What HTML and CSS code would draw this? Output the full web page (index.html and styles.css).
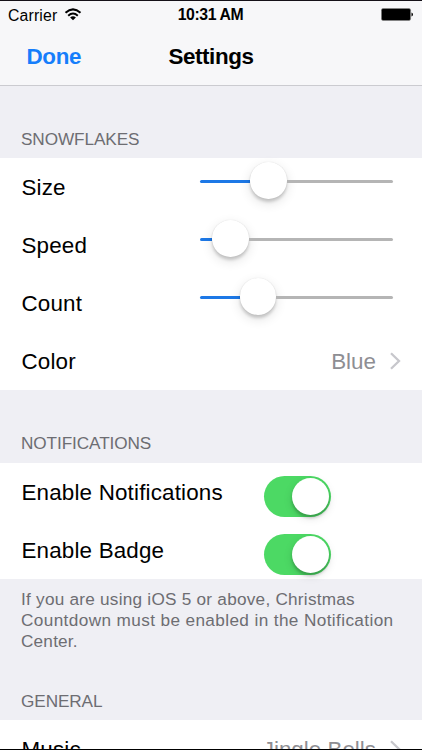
FILE: index.html
```html
<!DOCTYPE html>
<html lang="en">
<head>
<meta charset="utf-8">
<title>Settings</title>
<link rel="stylesheet" href="styles.css">
</head>
<body>
<div class="screen">
  <header class="top">
    <div class="status">
      <div class="carrier"><span>Carrier</span>
        <svg class="wifi" width="18" height="13" viewBox="0 0 18 13" fill="none" stroke="#000" stroke-width="2"><path d="M1.500 4.800Q9-2 16.500 4.800"/><path d="M4.200 7.700Q9 3.400 13.800 7.700"/><path d="M9 12.300L6.100 9.500Q9 7.100 11.900 9.500Z" fill="#000" stroke="none"/></svg>
      </div>
      <span class="time">10:31 AM</span>
      <svg class="battery" width="33" height="13" viewBox="0 0 33 13"><rect x=".4" y=".4" width="29.200" height="12.200" rx="1.800" fill="#000" stroke="#888" stroke-width=".7"/><path d="M30.500 4.500Q32 5 32 6.500T30.500 8.500Z" fill="#000"/></svg>
    </div>
    <nav class="nav"><span class="done">Done</span><h1 class="title">Settings</h1></nav>
  </header>
  <main>
    <h2 class="heading h-snow">Snowflakes</h2>
    <section class="list">
      <div class="row"><span class="label">Size</span><div class="slider"><i class="fill f-size"></i><i class="knob"></i><i class="rest"></i></div></div>
      <div class="row"><span class="label">Speed</span><div class="slider"><i class="fill f-speed"></i><i class="knob"></i><i class="rest"></i></div></div>
      <div class="row"><span class="label">Count</span><div class="slider"><i class="fill f-count"></i><i class="knob"></i><i class="rest"></i></div></div>
      <div class="row"><span class="label">Color</span><div class="value"><span>Blue</span><svg width="12" height="18" viewBox="0 0 12 18" fill="none" stroke="#c7c7cc" stroke-width="2.300"><path d="M1 1.200L9 9L1 16.800"/></svg></div></div>
    </section>
    <h2 class="heading h-notif">Notifications</h2>
    <section class="list">
      <div class="row"><span class="label">Enable Notifications</span><div class="switch"><i></i></div></div>
      <div class="row"><span class="label">Enable Badge</span><div class="switch"><i></i></div></div>
    </section>
    <p class="note"><span class="n1">If you are using iOS 5 or above, Christmas</span><span class="n2">Countdown must be enabled in the Notification</span><span class="n3">Center.</span></p>
    <h2 class="heading h-general">General</h2>
    <section class="list">
      <div class="row"><span class="label">Music</span><div class="value"><span>Jingle Bells</span><svg width="12" height="18" viewBox="0 0 12 18" fill="none" stroke="#c7c7cc" stroke-width="2.300"><path d="M1 1.200L9 9L1 16.800"/></svg></div></div>
    </section>
  </main>
</div>
</body>
</html>
```
FILE: styles.css
```css
* { box-sizing: border-box; margin: 0; padding: 0; }
body { background: #efeff4; font-family: "Liberation Sans", Arial, sans-serif; color: #000; }
.screen { width: 422px; height: 750px; overflow: hidden; border-top: 1px solid #151118; border-bottom: 1px solid #000; background: #efeff4; }
.top { height: 85px; background: #f7f7f9; border-bottom: 1px solid #cbcbd0; }
.status { height: 28px; display: grid; grid-template-columns: 1fr auto 1fr; align-items: center; padding: 0 9px 0 8px; font-size: 15.8px; white-space: nowrap; }
.carrier { display: flex; align-items: center; gap: 7px; letter-spacing: .15px; padding-top: 1px; }
.wifi { margin-top: -2px; }
.time { font-weight: bold; letter-spacing: -.4px; }
.battery { justify-self: end; margin: -1px -1px 0 0; }
.nav { height: 56px; display: grid; grid-template-columns: 1fr auto 1fr; align-items: center; padding: 0 26px; font-size: 22.4px; line-height: 56px; font-weight: bold; }
.done { color: #167efb; letter-spacing: -.3px; padding-left: .5px; }
.title { font-size: 22.4px; letter-spacing: -.4px; }
.heading { display: flex; align-items: flex-end; padding: 0 21px 9px; font-size: 17.2px; line-height: 20px; font-weight: normal; color: #6d6d72; letter-spacing: -.1px; text-transform: uppercase; white-space: nowrap; }
.h-snow { height: 72px; }
.h-notif { height: 73px; padding-bottom: 10px; }
.h-general { height: 68px; }
.list { background: #fff; }
.row { height: 58px; display: flex; align-items: center; justify-content: space-between; padding-left: 21.5px; font-size: 22.4px; line-height: 58px; white-space: nowrap; }
.label { padding-top: 2px; letter-spacing: .17px; }
.slider { width: 193px; height: 37px; margin: 0 29px 13px 0; display: flex; align-items: center; }
.fill { height: 3px; background: #1d78e6; border-radius: 2px 0 0 2px; margin-top: 2px; }
.f-size { width: 50px; }
.f-speed { width: 12px; }
.f-count { width: 39.5px; }
.knob { width: 36.5px; height: 36.5px; border-radius: 50%; background: #fff; box-shadow: 0 0 1px rgba(0,0,0,.15), 0 3px 3px rgba(0,0,0,.16), 0 4px 12px rgba(0,0,0,.12); }
.rest { flex: 1; height: 3px; margin-top: 2px; background: #b5b5b5; border-radius: 0 2px 2px 0; }
.value { display: flex; align-items: center; gap: 14px; margin-right: 20px; padding-top: 2px; color: #8e8e93; }
.value svg { margin-top: -3px; }
.switch { width: 67px; height: 41px; margin: 9px 91px 0 0; border-radius: 21px; background: #4cd964; padding: 2px; display: flex; justify-content: flex-end; }
.switch i { width: 37px; height: 37px; border-radius: 50%; background: #fff; box-shadow: 0 3px 3px rgba(0,0,0,.2), 0 3px 10px rgba(0,0,0,.12); }
.note { height: 73px; padding: 10px 21px 0; display: flex; flex-direction: column; font-size: 17.2px; line-height: 21px; color: #6d6d72; white-space: nowrap; }
.n1 { letter-spacing: .24px; }
.n2 { letter-spacing: .38px; }
.n3 { letter-spacing: .2px; }
```
